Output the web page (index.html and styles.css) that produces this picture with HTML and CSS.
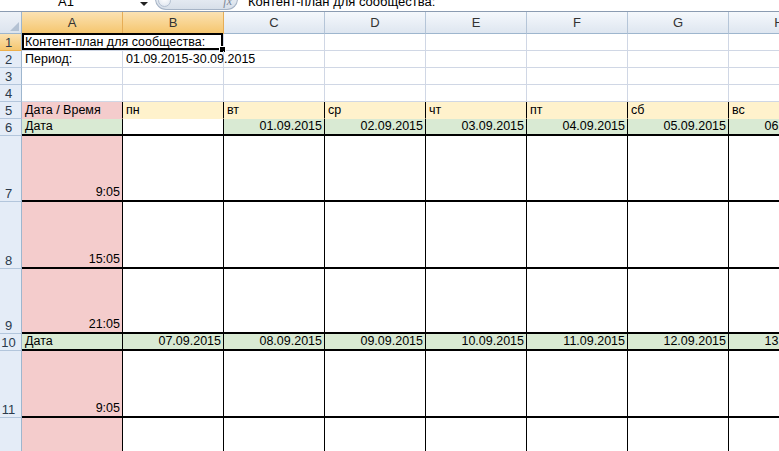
FILE: index.html
```html
<!DOCTYPE html>
<html lang="ru">
<head>
    <meta charset="UTF-8">
    <title>Контент-план</title>
    <link rel="stylesheet" href="styles.css">
</head>
<body>
    <div class="formula-bar">
        <div class="name-box">A1</div>
        <div class="name-arrow"><span class="arrow"></span></div>
        <div class="fx-pill">
            <span class="grip"></span>
            <span class="fx">fx</span>
        </div>
        <div class="formula-input">Контент-план для сообщества:</div>
    </div>

    <div class="sheet">
        <!-- column headers -->
        <div class="corner"><span class="corner-mark"></span></div>
        <div class="col-head sel">A</div>
        <div class="col-head sel">B</div>
        <div class="col-head">C</div>
        <div class="col-head">D</div>
        <div class="col-head">E</div>
        <div class="col-head">F</div>
        <div class="col-head">G</div>
        <div class="col-head">H</div>

        <!-- row 1 -->
        <div class="row-head sel">1</div>
        <div class="cell title">Контент-план для сообщества:<span class="sel-box"><span class="handle"></span></span></div>
        <div class="cell"></div><div class="cell"></div><div class="cell"></div>
        <div class="cell"></div><div class="cell"></div><div class="cell"></div>

        <!-- row 2 -->
        <div class="row-head">2</div>
        <div class="cell">Период:</div>
        <div class="cell spill">01.09.2015-30.09.2015</div>
        <div class="cell"></div><div class="cell"></div><div class="cell"></div>
        <div class="cell"></div><div class="cell"></div><div class="cell"></div>

        <!-- row 3 -->
        <div class="row-head">3</div>
        <div class="cell"></div><div class="cell"></div><div class="cell"></div><div class="cell"></div>
        <div class="cell"></div><div class="cell"></div><div class="cell"></div><div class="cell"></div>

        <!-- row 4 -->
        <div class="row-head">4</div>
        <div class="cell"></div><div class="cell"></div><div class="cell"></div><div class="cell"></div>
        <div class="cell"></div><div class="cell"></div><div class="cell"></div><div class="cell"></div>

        <!-- row 5: days -->
        <div class="row-head">5</div>
        <div class="cell pink edge">Дата / Время</div>
        <div class="cell yellow edge">пн</div>
        <div class="cell yellow edge">вт</div>
        <div class="cell yellow edge">ср</div>
        <div class="cell yellow edge">чт</div>
        <div class="cell yellow edge">пт</div>
        <div class="cell yellow edge">сб</div>
        <div class="cell yellow edge">вс</div>

        <!-- row 6: dates week 1 -->
        <div class="row-head">6</div>
        <div class="cell green edge rule">Дата</div>
        <div class="cell edge rule"></div>
        <div class="cell green edge rule num">01.09.2015</div>
        <div class="cell green edge rule num">02.09.2015</div>
        <div class="cell green edge rule num">03.09.2015</div>
        <div class="cell green edge rule num">04.09.2015</div>
        <div class="cell green edge rule num">05.09.2015</div>
        <div class="cell green edge rule num">06.09.2015</div>

        <!-- row 7 -->
        <div class="row-head">7</div>
        <div class="cell pink edge rule num">9:05</div>
        <div class="cell edge rule"></div><div class="cell edge rule"></div><div class="cell edge rule"></div><div class="cell edge rule"></div>
        <div class="cell edge rule"></div><div class="cell edge rule"></div><div class="cell edge rule"></div>

        <!-- row 8 -->
        <div class="row-head">8</div>
        <div class="cell pink edge rule num">15:05</div>
        <div class="cell edge rule"></div><div class="cell edge rule"></div><div class="cell edge rule"></div><div class="cell edge rule"></div>
        <div class="cell edge rule"></div><div class="cell edge rule"></div><div class="cell edge rule"></div>

        <!-- row 9 -->
        <div class="row-head">9</div>
        <div class="cell pink edge rule num">21:05</div>
        <div class="cell edge rule"></div><div class="cell edge rule"></div><div class="cell edge rule"></div><div class="cell edge rule"></div>
        <div class="cell edge rule"></div><div class="cell edge rule"></div><div class="cell edge rule"></div>

        <!-- row 10: dates week 2 -->
        <div class="row-head">10</div>
        <div class="cell green edge rule">Дата</div>
        <div class="cell green edge rule num">07.09.2015</div>
        <div class="cell green edge rule num">08.09.2015</div>
        <div class="cell green edge rule num">09.09.2015</div>
        <div class="cell green edge rule num">10.09.2015</div>
        <div class="cell green edge rule num">11.09.2015</div>
        <div class="cell green edge rule num">12.09.2015</div>
        <div class="cell green edge rule num">13.09.2015</div>

        <!-- row 11 -->
        <div class="row-head">11</div>
        <div class="cell pink edge rule num">9:05</div>
        <div class="cell edge rule"></div><div class="cell edge rule"></div><div class="cell edge rule"></div><div class="cell edge rule"></div>
        <div class="cell edge rule"></div><div class="cell edge rule"></div><div class="cell edge rule"></div>

        <!-- row 12 -->
        <div class="row-head"></div>
        <div class="cell pink edge"></div>
        <div class="cell edge"></div><div class="cell edge"></div><div class="cell edge"></div><div class="cell edge"></div>
        <div class="cell edge"></div><div class="cell edge"></div><div class="cell edge"></div>
    </div>
</body>
</html>
```

FILE: styles.css
```css
* {
    margin: 0;
    padding: 0;
    box-sizing: border-box;
}

body {
    font-family: 'Liberation Sans', Arial, sans-serif;
    background: #fff;
    width: 779px;
    height: 451px;
    overflow: hidden;
}

/* formula bar (only the lower part is visible) */
.formula-bar {
    display: flex;
    height: 24px;
    margin-top: -12px;
    background: #fff;
    border-bottom: 1px solid #8b9bb1;
}

.name-box {
    width: 132px;
    text-align: center;
    font-size: 13px;
    line-height: 15px;
    padding-top: 6px;
    color: #000;
}

.name-arrow {
    width: 23px;
    display: flex;
    justify-content: center;
    padding-top: 14px;
}

.arrow {
    width: 0;
    height: 0;
    border-left: 4px solid transparent;
    border-right: 4px solid transparent;
    border-top: 4px solid #222;
}

.fx-pill {
    width: 83px;
    height: 22px;
    display: flex;
    align-items: flex-end;
    padding: 0 5px 2px 2px;
    background: linear-gradient(#f4f7fb, #d7dfe9);
    border: 1px solid #a6b4c6;
    border-top: none;
    border-radius: 0 0 11px 11px;
}

.grip {
    width: 13px;
    height: 13px;
    border-radius: 50%;
    background: radial-gradient(circle at 50% 35%, #ffffff, #dbe3ee);
    border: 1px solid #b3c0d1;
}

.fx {
    margin-left: auto;
    font-family: 'Liberation Serif', serif;
    font-style: italic;
    font-size: 12px;
    line-height: 12px;
    color: #7b8796;
}

.formula-input {
    flex: 1;
    padding: 6px 0 0 10px;
    font-size: 13px;
    line-height: 15px;
    color: #000;
    white-space: nowrap;
}

/* sheet grid */
.sheet {
    display: grid;
    grid-template-columns: 22px repeat(8, 101px);
    grid-template-rows: 22px repeat(6, 17px) 66px 67px 65px 17px 67px 60px;
    width: 830px;
}

.corner {
    display: flex;
    justify-content: flex-end;
    align-items: flex-end;
    padding: 0 2px 2px 0;
    background: linear-gradient(#eef2f8, #dce4ee);
    border-right: 1px solid #9eb6ce;
    border-bottom: 1px solid #9eb6ce;
}

.corner-mark {
    width: 0;
    height: 0;
    border-left: 9px solid transparent;
    border-bottom: 9px solid #b4c2d3;
}

.col-head {
    display: flex;
    align-items: center;
    justify-content: center;
    font-size: 13px;
    color: #333;
    background: linear-gradient(#f5f8fc, #dee6f0);
    border-right: 1px solid #b5c5d8;
    border-bottom: 1px solid #9eb6ce;
}

.col-head.sel {
    background: linear-gradient(#fbe2b3, #f5c66f);
    border-right-color: #e6ad56;
    border-bottom-color: #eeb04c;
}

.row-head {
    display: flex;
    align-items: flex-end;
    justify-content: center;
    padding-right: 4px;
    font-size: 13px;
    line-height: 15px;
    color: #2b3a4c;
    background: #e4ecf7;
    border-right: 1px solid #9eb6ce;
    border-bottom: 1px solid #b3c6dc;
}

.row-head.sel {
    background: linear-gradient(#fbe2b3, #f5c66f);
    border-bottom-color: #eeb04c;
}

.cell {
    display: flex;
    align-items: flex-end;
    padding: 0 2px 1px 3px;
    font-size: 12.5px;
    line-height: 14px;
    color: #000;
    white-space: nowrap;
    overflow: hidden;
    border-right: 1px solid #d0d7e5;
    border-bottom: 1px solid #d0d7e5;
}

.cell.num {
    justify-content: flex-end;
}

/* text running into the empty neighbour cell */
.cell.spill {
    overflow: visible;
    position: relative;
    z-index: 1;
}

.cell.title {
    grid-column: span 2;
    position: relative;
    overflow: visible;
}

.sel-box {
    position: absolute;
    top: -1px;
    left: 0;
    right: 0;
    bottom: 0;
    border: 2px solid #000;
}

.handle {
    position: absolute;
    right: -5px;
    bottom: -5px;
    width: 7px;
    height: 7px;
    background: #000;
    border: 1px solid #fff;
}

.pink {
    background: #f4cccc;
    border-color: #f4cccc;
}

.green {
    background: #d9ead3;
    border-color: #d9ead3;
}

.yellow {
    background: #fff2cc;
    border-color: #fff2cc;
}

.edge {
    border-right: 1px solid #000;
}

.rule {
    border-bottom: 2px solid #000;
}
```
